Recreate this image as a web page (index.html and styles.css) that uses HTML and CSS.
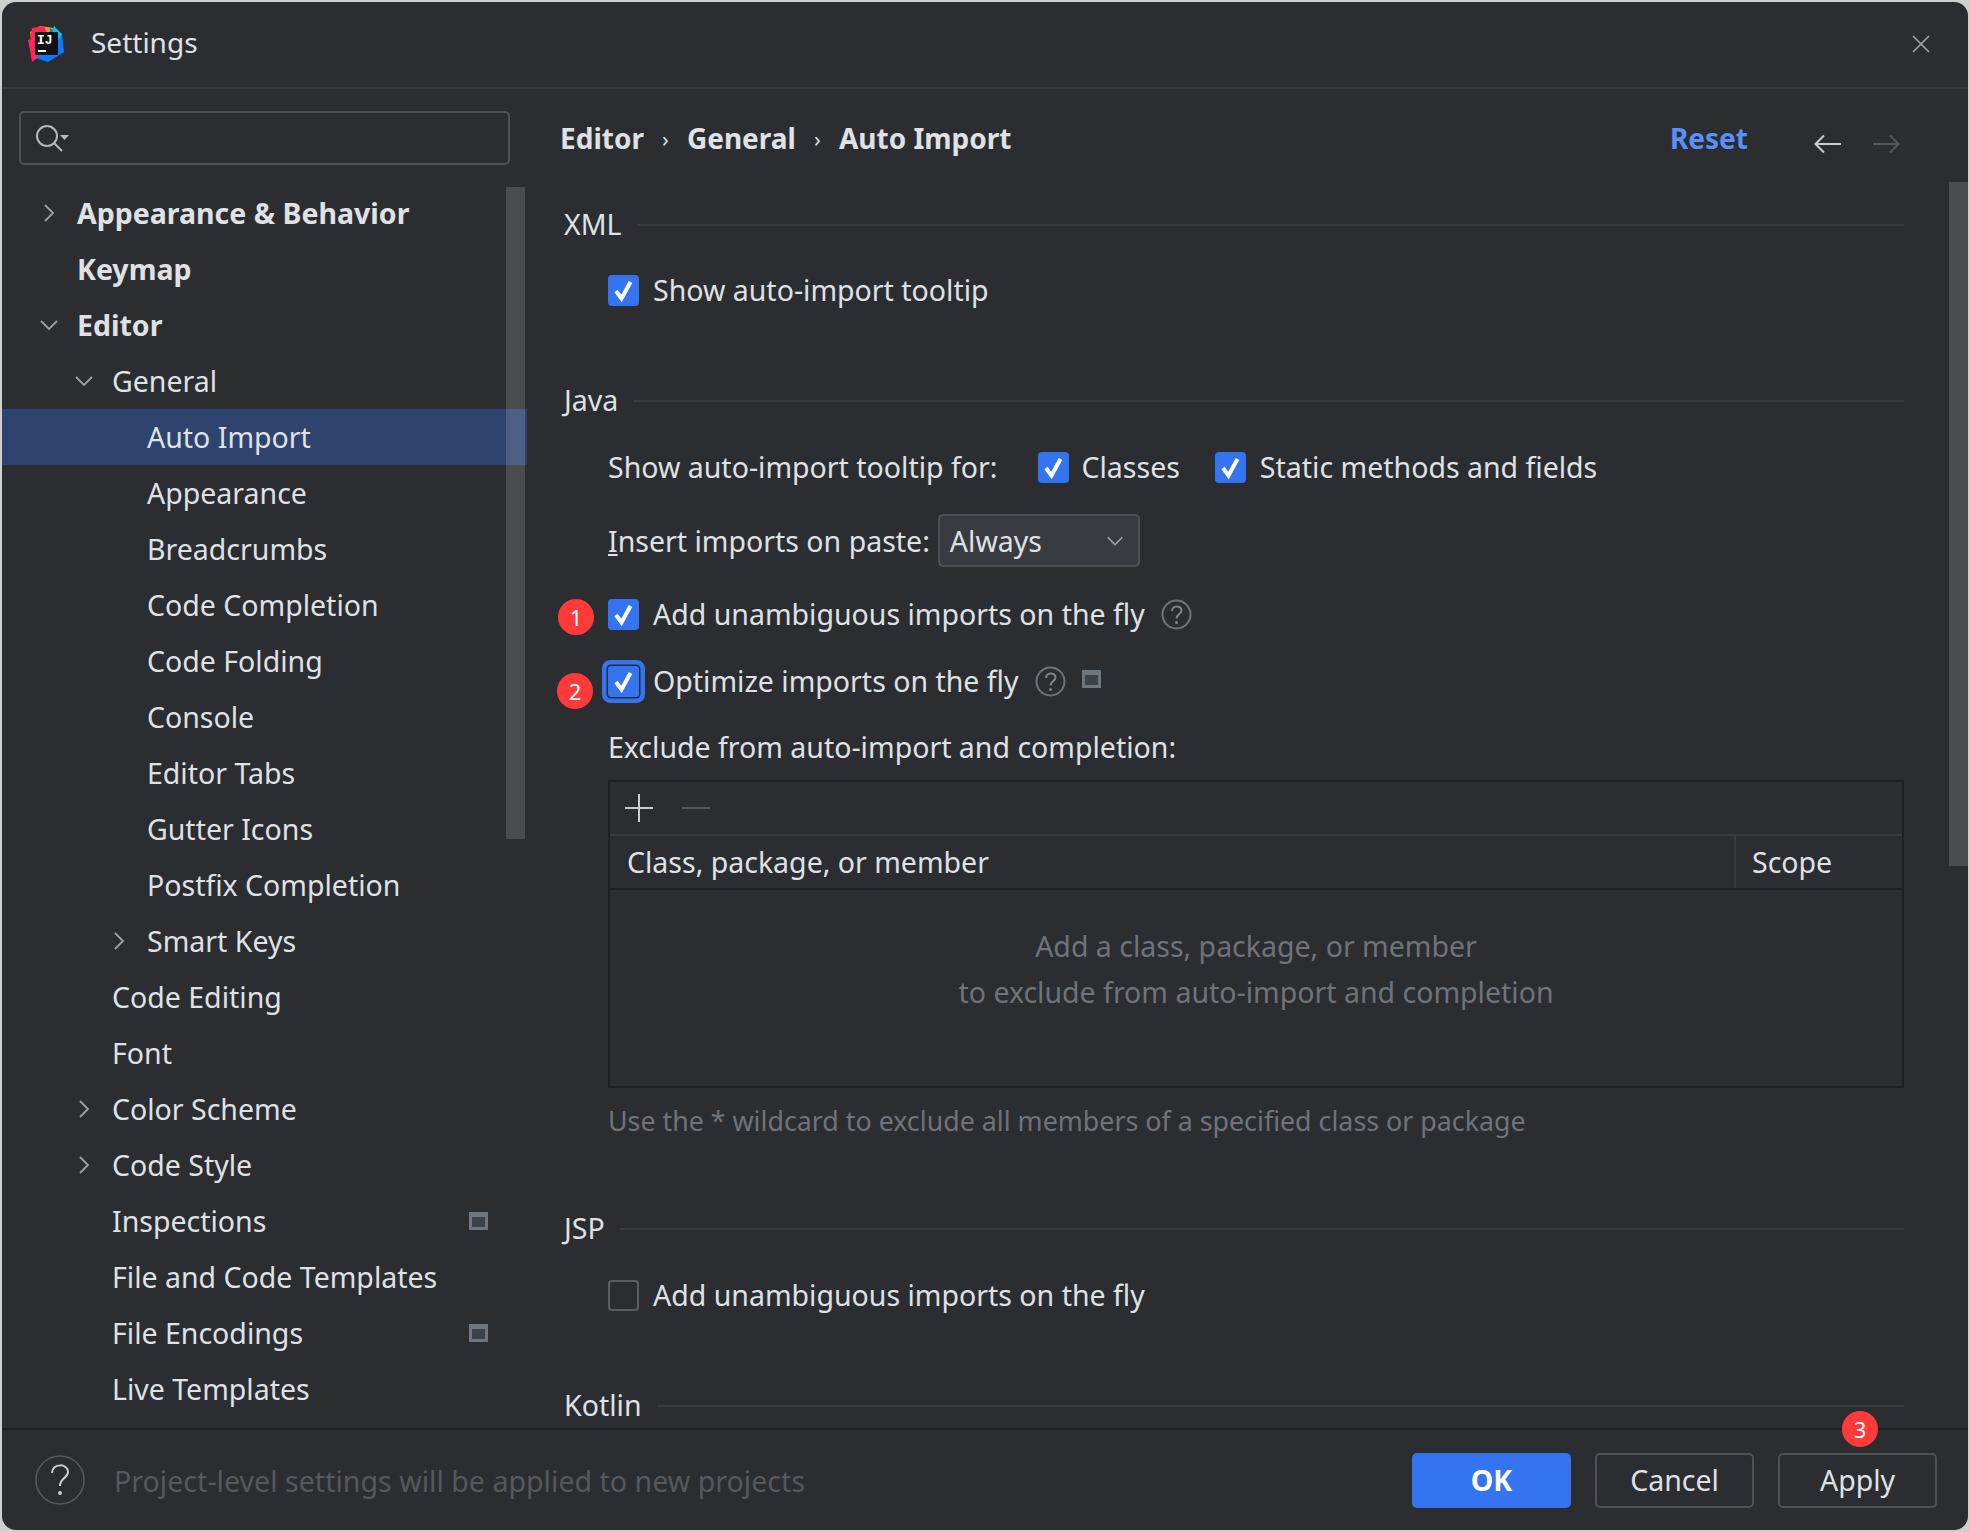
FILE: index.html
```html
<!DOCTYPE html>
<html lang="en">
<head>
    <meta charset="UTF-8">
    <title>Settings</title>
    <link rel="stylesheet" href="styles.css">
</head>
<body>
    <svg class="sprites" width="0" height="0">
        <symbol id="check" viewBox="0 0 31 31"><path d="M8 16l5.500 7.500L22.500 7" fill="none" stroke="#fff" stroke-width="4"/></symbol>
        <symbol id="right" viewBox="0 0 20 20"><path d="M6 2l8 8-8 8" fill="none" stroke="#9da0a8" stroke-width="1.8"/></symbol>
        <symbol id="down" viewBox="0 0 20 20"><path d="M2 6l8 8 8-8" fill="none" stroke="#9da0a8" stroke-width="1.8"/></symbol>
        <symbol id="project" viewBox="0 0 19 18"><rect width="19" height="18" fill="#6e7780"/><rect x="3" y="5" width="13" height="10" fill="#3d4249"/></symbol>
        <symbol id="help" viewBox="0 0 31 31"><circle cx="15.5" cy="15.5" r="14" fill="none" stroke="#6f7479" stroke-width="2"/><path d="M11 12c0-6 9.500-6 9.500-.5 0 3.500-5 3.500-5 8" fill="none" stroke="#7f8489" stroke-width="2"/><circle cx="15.500" cy="23.500" r="1.500" fill="#7f8489"/></symbol>
    </svg>

    <div class="window">
        <div class="titlebar">
            <svg class="logo" width="36" height="36" viewBox="0 0 36 36">
                <polygon points="2,6 12,0 26,2 22,18 4,20" fill="#ff9419"/>
                <polygon points="4,2 16,0 20,10 2,14" fill="#fe2857"/>
                <polygon points="0,14 8,12 12,30 4,36 2,24" fill="#fe2857"/>
                <polygon points="22,2 34,8 36,26 20,36 8,32 20,20" fill="#087cfa"/>
                <polygon points="26,0 34,8 30,14 24,8" fill="#07c3f2"/>
                <rect x="7" y="6" width="23" height="23" fill="#111"/>
                <text x="9" y="18" class="logo-text">IJ</text>
                <rect x="10" y="24" width="8" height="2" fill="#fff"/>
            </svg>
            <span class="title">Settings</span>
            <svg class="close" width="18" height="18" viewBox="0 0 18 18"><path d="M1 1l16 16M17 1L1 17" stroke="#a0a2a6" stroke-width="1.700"/></svg>
        </div>

        <div class="main">
            <div class="sidebar">
                <div class="search">
                    <svg width="36" height="28" viewBox="0 0 36 28"><circle cx="12" cy="12" r="10" fill="none" stroke="#b4b8bf" stroke-width="2"/><path d="M19 19l8 8" stroke="#b4b8bf" stroke-width="2"/><path d="M25 11h9l-4.500 5z" fill="#b4b8bf"/></svg>
                </div>
                <div class="tree">
                    <div class="row l0 bold"><svg class="arrow"><use href="#right"/></svg>Appearance &amp; Behavior</div>
                    <div class="row l0 bold"><span class="arrow"></span>Keymap</div>
                    <div class="row l0 bold"><svg class="arrow"><use href="#down"/></svg>Editor</div>
                    <div class="row l1"><svg class="arrow"><use href="#down"/></svg>General</div>
                    <div class="row l2 selected"><span class="arrow"></span>Auto Import</div>
                    <div class="row l2"><span class="arrow"></span>Appearance</div>
                    <div class="row l2"><span class="arrow"></span>Breadcrumbs</div>
                    <div class="row l2"><span class="arrow"></span>Code Completion</div>
                    <div class="row l2"><span class="arrow"></span>Code Folding</div>
                    <div class="row l2"><span class="arrow"></span>Console</div>
                    <div class="row l2"><span class="arrow"></span>Editor Tabs</div>
                    <div class="row l2"><span class="arrow"></span>Gutter Icons</div>
                    <div class="row l2"><span class="arrow"></span>Postfix Completion</div>
                    <div class="row l2"><svg class="arrow"><use href="#right"/></svg>Smart Keys</div>
                    <div class="row l1"><span class="arrow"></span>Code Editing</div>
                    <div class="row l1"><span class="arrow"></span>Font</div>
                    <div class="row l1"><svg class="arrow"><use href="#right"/></svg>Color Scheme</div>
                    <div class="row l1"><svg class="arrow"><use href="#right"/></svg>Code Style</div>
                    <div class="row l1"><span class="arrow"></span>Inspections<svg class="project tree-project"><use href="#project"/></svg></div>
                    <div class="row l1"><span class="arrow"></span>File and Code Templates</div>
                    <div class="row l1"><span class="arrow"></span>File Encodings<svg class="project tree-project"><use href="#project"/></svg></div>
                    <div class="row l1"><span class="arrow"></span>Live Templates</div>
                </div>
                <div class="scrollbar side-thumb"></div>
            </div>

            <div class="panel">
                <div class="crumbs">
                    <span>Editor</span><span class="sep">›</span><span>General</span><span class="sep">›</span><span>Auto Import</span>
                    <a class="reset">Reset</a>
                    <svg class="nav" width="28" height="20" viewBox="0 0 28 20"><path d="M27 10H2M10 1.500L1.500 10l8.500 8.500" fill="none" stroke="#c9ccd1" stroke-width="2"/></svg>
                    <svg class="nav nav-next" width="28" height="20" viewBox="0 0 28 20"><path d="M1 10h25M18 1.500l8.500 8.500-8.500 8.500" fill="none" stroke="#55585d" stroke-width="2"/></svg>
                </div>

                <div class="group first">XML<i></i></div>
                <div class="line m25"><span class="box"><svg><use href="#check"/></svg></span>Show auto-import tooltip</div>

                <div class="group m71">Java<i></i></div>
                <div class="line m26 plain">
                    Show auto-import tooltip for:
                    <span class="box box-gap"><svg><use href="#check"/></svg></span>Classes
                    <span class="box box-gap2"><svg><use href="#check"/></svg></span>Static methods and fields
                </div>
                <div class="line m27 plain tall">
                    <span><u>I</u>nsert imports on paste:</span>
                    <div class="select">Always<svg width="18" height="18"><use href="#down"/></svg></div>
                </div>
                <div class="line m27"><span class="box"><svg><use href="#check"/></svg></span>Add unambiguous imports on the fly<svg class="help" width="31" height="31"><use href="#help"/></svg>
                    <span class="badge badge-1">1</span>
                </div>
                <div class="line m27"><span class="box focused"><svg><use href="#check"/></svg></span>Optimize imports on the fly<svg class="help" width="31" height="31"><use href="#help"/></svg><svg class="project inline-project"><use href="#project"/></svg>
                    <span class="badge badge-2">2</span>
                </div>
                <div class="line m26 plain">Exclude from auto-import and completion:</div>

                <div class="table">
                    <div class="toolbar">
                        <svg width="30" height="30" viewBox="0 0 30 30"><path d="M15 1v28M1 15h28" stroke="#c9ccd1" stroke-width="2"/></svg>
                        <svg width="30" height="30" viewBox="0 0 30 30"><path d="M1 15h28" stroke="#55585d" stroke-width="2"/></svg>
                    </div>
                    <div class="thead"><span class="col-name">Class, package, or member</span><span class="col-scope">Scope</span></div>
                    <div class="empty">Add a class, package, or member<br>to exclude from auto-import and completion</div>
                </div>
                <div class="hint">Use the * wildcard to exclude all members of a specified class or package</div>

                <div class="group m68">JSP<i></i></div>
                <div class="line m26"><span class="box off"></span>Add unambiguous imports on the fly</div>

                <div class="group m71">Kotlin<i></i></div>
                <div class="scrollbar panel-thumb"></div>
            </div>
        </div>

        <div class="footer">
            <svg width="50" height="50" viewBox="0 0 50 50"><circle cx="25" cy="25" r="24" fill="none" stroke="#55585d" stroke-width="1.600"/><path d="M17 18c0-10 16-10 16-1 0 6-8 6-8 14" fill="none" stroke="#c9ccd1" stroke-width="2"/><circle cx="25" cy="38" r="2" fill="#c9ccd1"/></svg>
            <span class="footer-text">Project-level settings will be applied to new projects</span>
            <button class="btn primary">OK</button>
            <button class="btn">Cancel</button>
            <button class="btn">Apply</button>
            <span class="badge badge-3">3</span>
        </div>
    </div>
</body>
</html>
```

FILE: styles.css
```css
* {
    box-sizing: border-box;
    margin: 0;
    padding: 0;
}
body {
    background-color: #cfcfcf;
    font-family: 'Noto Sans', sans-serif;
    font-size: 28.5px;
    color: #dfe1e5;
}
.sprites {
    position: absolute;
}
.window {
    margin: 2px;
    width: 1966px;
    height: 1528px;
    background-color: #2b2d30;
    border-radius: 14px;
    overflow: hidden;
    display: flex;
    flex-direction: column;
}
.titlebar {
    height: 87px;
    flex-shrink: 0;
    border-bottom: 2px solid #393b40;
    display: flex;
    align-items: center;
    padding: 0 38px 2px 26px;
}
.logo-text {
    font-family: 'Liberation Mono', monospace;
    font-size: 13px;
    font-weight: bold;
    fill: #fff;
}
.title {
    margin-left: 27px;
    margin-top: -3px;
    font-size: 28px;
}
.close {
    margin-left: auto;
}
.main {
    flex: 1;
    display: flex;
    min-height: 0;
}
.sidebar {
    width: 525px;
    flex-shrink: 0;
    position: relative;
}
.search {
    margin: 22px 0 0 17px;
    width: 491px;
    height: 54px;
    border: 2px solid #4e5157;
    border-radius: 5px;
    display: flex;
    align-items: center;
    padding-left: 14px;
}
.tree {
    margin-top: 20px;
}
.row {
    height: 56px;
    display: flex;
    align-items: center;
}
.row.bold {
    font-weight: 700;
}
.l0 { padding-left: 37px; }
.l1 { padding-left: 72px; }
.l2 { padding-left: 107px; }
.arrow {
    width: 20px;
    height: 20px;
    margin-right: 18px;
    flex-shrink: 0;
}
.selected {
    background-color: #2e436e;
}
.project {
    width: 19px;
    height: 18px;
}
.tree-project {
    margin-left: auto;
    margin-right: 39px;
}
.scrollbar {
    position: absolute;
    width: 19px;
    background-color: rgba(255,255,255,0.15);
}
.side-thumb {
    top: 98px;
    right: 2px;
    height: 652px;
}
.panel {
    flex: 1;
    position: relative;
    padding: 0 64px 0 37px;
    overflow: hidden;
}
.panel-thumb {
    top: 93px;
    right: 0;
    height: 684px;
}
.crumbs {
    height: 102px;
    display: flex;
    align-items: center;
    margin-left: -4px;
    padding-bottom: 4px;
    font-weight: 700;
    font-size: 28px;
}
.sep {
    font-weight: 400;
    font-size: 22px;
    width: 43px;
    text-align: center;
}
.reset {
    margin-left: auto;
    margin-right: 66px;
    color: #5a90fa;
}
.nav {
    margin-top: 12px;
}
.nav-next {
    margin-left: 30px;
    margin-right: 4px;
}
.group {
    height: 40px;
    display: flex;
    align-items: center;
    padding-bottom: 2px;
}
.group i {
    flex: 1;
    height: 2px;
    margin-left: 15px;
    margin-top: 2px;
    background-color: #393b40;
}
.first { margin-top: 14px; }
.m25 { margin-top: 25px; }
.m26 { margin-top: 26px; }
.m27 { margin-top: 27px; }
.m68 { margin-top: 68px; }
.m71 { margin-top: 71px; }
.line {
    height: 40px;
    display: flex;
    align-items: center;
    margin-left: 44px;
    position: relative;
}
.line.tall {
    height: 53px;
}
.box {
    width: 31px;
    height: 31px;
    background-color: #3574f0;
    border-radius: 4px;
    margin-right: 14px;
    flex-shrink: 0;
    display: block;
    position: relative;
}
.box svg {
    display: block;
    width: 31px;
    height: 31px;
}
.box.focused {
    box-shadow: 0 0 0 1.5px #2b2d30, 0 0 0 6px #3574f0;
    border-radius: 3px;
}
.box.off {
    background-color: #2b2d30;
    border: 2px solid #5a5d63;
}
.box-gap {
    margin-left: 41px;
    margin-right: 12px;
}
.box-gap2 {
    margin-left: 35px;
}
.select {
    margin-left: 8px;
    width: 202px;
    height: 53px;
    background-color: #393b40;
    border: 2px solid #4e5157;
    border-radius: 5px;
    display: flex;
    align-items: center;
    justify-content: space-between;
    padding: 0 14px 0 10px;
}
.help {
    margin-left: 16px;
}
.inline-project {
    margin-left: 16px;
    margin-top: -4px;
}
.badge {
    position: absolute;
    width: 36px;
    height: 36px;
    border-radius: 50%;
    background-color: #fe3a3a;
    color: #fff;
    font-size: 22px;
    display: flex;
    align-items: center;
    justify-content: center;
}
.badge-1 { left: -50px; top: 5px; }
.badge-2 { left: -51px; top: 12px; }
.badge-3 { right: 90px; top: -19px; z-index: 2; }
.table {
    margin: 13px 0 0 44px;
    height: 308px;
    border: 2px solid #1e1f22;
}
.toolbar {
    height: 54px;
    display: flex;
    align-items: center;
    gap: 27px;
    padding-left: 14px;
    border-bottom: 2px solid #393b40;
}
.thead {
    height: 54px;
    display: flex;
    align-items: center;
    border-bottom: 2px solid #1e1f22;
}
.col-name {
    flex: 1;
    padding-left: 17px;
}
.col-scope {
    width: 168px;
    height: 100%;
    display: flex;
    align-items: center;
    padding-left: 16px;
    border-left: 2px solid #393b40;
}
.empty {
    padding-top: 33px;
    text-align: center;
    line-height: 46px;
    color: #6f737a;
}
.hint {
    margin: 13px 0 0 44px;
    height: 40px;
    line-height: 40px;
    font-size: 26.8px;
    color: #6f737a;
}
.footer {
    height: 102px;
    flex-shrink: 0;
    position: relative;
    border-top: 2px solid #1e1f22;
    display: flex;
    align-items: center;
    padding: 0 31px 0 33px;
}
.footer-text {
    margin-left: 29px;
    color: #55585d;
    margin-right: auto;
    font-size: 28.6px;
}
.btn {
    width: 159px;
    height: 55px;
    margin-left: 24px;
    font: inherit;
    color: #dfe1e5;
    background: transparent;
    border: 2px solid #4e5157;
    border-radius: 5px;
}
.btn.primary {
    background-color: #3574f0;
    border-color: #3574f0;
    color: #fff;
    font-weight: 700;
}
```
